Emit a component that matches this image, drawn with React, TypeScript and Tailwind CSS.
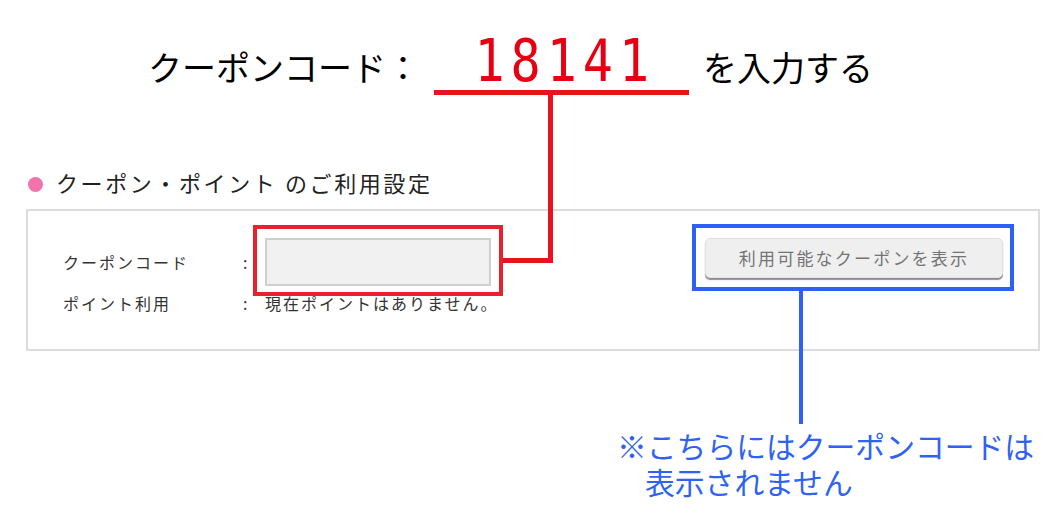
export default function App() {
  return (
    <div className="relative w-[1062px] h-[523px] overflow-hidden bg-white font-['Noto_Sans_CJK_JP','Noto_Sans',sans-serif] text-[#222]">
      {/* title line */}
      <div className="flex items-start pt-[31px] pl-[148px]">
        <span className="mt-[19px] text-[34px] leading-none text-black">クーポンコード：</span>
        <div className="ml-[14px] w-[255px] border-b-[5px] border-[#e5141f] text-center">
          <span className="inline-block scale-x-[0.85] pl-[7px] font-['DejaVu_Sans_Mono',monospace] text-[59px] leading-none tracking-[7px] text-[#e60012]">
            18141
          </span>
        </div>
        <span className="ml-[14px] mt-[19px] text-[34px] leading-none text-black">を入力する</span>
      </div>

      {/* section heading */}
      <div className="mt-[74px] flex items-center pl-[28px]">
        <span className="mt-[4px] h-[15px] w-[15px] rounded-full bg-[#f273ac]" />
        <h2 className="ml-[13px] text-[22px] leading-[26px] tracking-[2.6px] text-[#222]">
          クーポン・ポイント のご利用設定
        </h2>
      </div>

      {/* panel */}
      <div className="ml-[26px] mt-[14px] flex h-[142px] w-[1014px] items-start justify-between border-2 border-[#dcdcdc] pl-[35px] pr-[35px] pt-[27px]">
        <div className="flex flex-col text-[16px] tracking-[2px] text-[#333]">
          <div className="flex h-[48px] items-center">
            <span className="w-[180px]">クーポンコード</span>
            <span className="w-[22px]">:</span>
            <div className="h-[48px] w-[226px] border-2 border-[#cfcfcf] bg-[#f1f1f1]" />
          </div>
          <div className="mt-[5px] flex h-[24px] items-center leading-[24px]">
            <span className="w-[180px]">ポイント利用</span>
            <span className="w-[22px]">:</span>
            <span>現在ポイントはありません。</span>
          </div>
        </div>
        <button className="flex h-[40px] w-[298px] items-center justify-center rounded-[5px] border border-[#e0e0e0] bg-[#efefef] text-[17px] tracking-[2.2px] text-[#747474] shadow-[0_2px_1px_#8f8f8f]">
          利用可能なクーポンを表示
        </button>
      </div>

      {/* note */}
      <p className="mt-[76px] pl-[645px] -indent-[28px] text-[29.8px] leading-[36px] text-[#2e62f2]">
        ※こちらにはクーポンコードは
        <br />
        表示されません
      </p>

      {/* annotation overlays */}
      <div className="absolute left-[548px] top-[95px] h-[168px] w-[5px] bg-[#e5141f]" />
      <div className="absolute left-[503px] top-[258px] h-[5px] w-[50px] bg-[#e5141f]" />
      <div className="absolute left-[253px] top-[225px] h-[71px] w-[250px] border-4 border-[#e8222d]" />
      <div className="absolute left-[692px] top-[224px] h-[67px] w-[322px] border-4 border-[#2f60f5]" />
      <div className="absolute left-[799px] top-[291px] h-[133px] w-[4px] bg-[#2f60f5]" />
    </div>
  );
}
